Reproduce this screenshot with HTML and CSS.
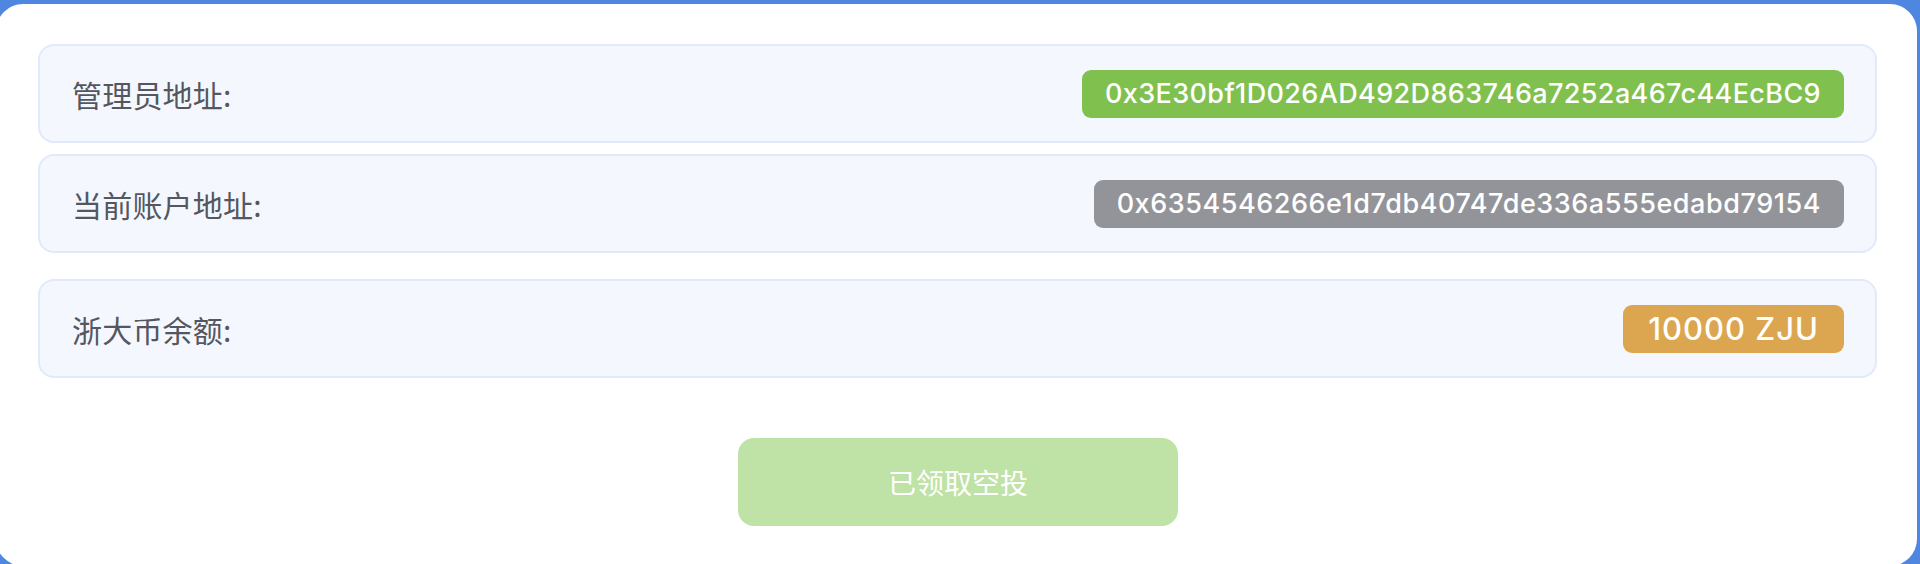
FILE: index.html
```html
<!DOCTYPE html>
<html lang="zh-CN">
<head>
<meta charset="utf-8">
<title>空投</title>
<link rel="stylesheet" href="styles.css">
</head>
<body>
<div class="card">
  <div class="group">
    <div class="row">
      <span class="label">管理员地址:</span>
      <span class="badge green">0x3E30bf1D026AD492D863746a7252a467c44EcBC9</span>
    </div>
    <div class="row">
      <span class="label">当前账户地址:</span>
      <span class="badge gray">0x6354546266e1d7db40747de336a555edabd79154</span>
    </div>
  </div>
  <div class="row balance">
    <span class="label">浙大币余额:</span>
    <span class="badge orange">10000 ZJU</span>
  </div>
  <div class="actions">
    <button class="btn" disabled>已领取空投</button>
  </div>
</div>
</body>
</html>
```
FILE: styles.css
```css
html, body {
  margin: 0;
  padding: 0;
  height: 100%;
  overflow: hidden;
}
body {
  background: #4f86e0;
  padding-top: 4px;
  box-sizing: border-box;
  font-family: Inter, "Noto Sans CJK SC", sans-serif;
}
.card {
  margin-left: -4px;
  width: 1921px;
  height: 562px;
  box-sizing: border-box;
  background: #ffffff;
  border-radius: 27px;
  padding: 40px 40px 0 42px;
}
.group {
  display: flex;
  flex-direction: column;
  gap: 11px;
}
.row {
  height: 99px;
  box-sizing: border-box;
  display: flex;
  align-items: center;
  justify-content: space-between;
  background: #f4f7fe;
  border: 2px solid #e1eafa;
  border-radius: 16px;
  padding: 0 31px 0 32px;
}
.balance {
  margin-top: 26px;
}
.label {
  font-family: "Noto Sans CJK SC", sans-serif;
  font-size: 30px;
  color: #54575e;
  letter-spacing: 0.2px;
}
.badge {
  height: 48px;
  box-sizing: border-box;
  display: inline-flex;
  align-items: center;
  padding: 0 23px;
  border-radius: 9px;
  color: #ffffff;
  font-family: Inter, sans-serif;
  font-size: 27px;
  font-weight: 500;
  letter-spacing: 0.45px;
}
.green {
  background: #7fc04f;
  letter-spacing: 0.38px;
}
.gray {
  background: #939499;
  letter-spacing: 0.55px;
}
.orange {
  background: #dca650;
  font-size: 31px;
  letter-spacing: 1px;
  padding: 0 25px;
}
.actions {
  display: flex;
  justify-content: center;
  margin-top: 60px;
}
.btn {
  width: 440px;
  height: 88px;
  border: none;
  border-radius: 16px;
  background: #bfe2a6;
  color: #ffffff;
  font-family: "Noto Sans CJK SC", sans-serif;
  font-size: 28px;
  padding: 0;
  margin-left: 1px;
}
```
